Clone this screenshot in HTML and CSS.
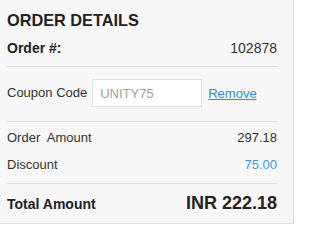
FILE: index.html
```html
<!DOCTYPE html>
<html>
<head>
<meta charset="utf-8">
<link rel="stylesheet" href="styles.css">
</head>
<body>
<div class="panel">
  <div class="head">
    <h2 class="title">ORDER DETAILS</h2>
    <div class="row order-row">
      <span class="label-strong">Order #:</span>
      <span class="num">102878</span>
    </div>
  </div>
  <div class="coupon">
    <span class="label">Coupon Code</span>
    <input class="coupon-input" type="text" placeholder="UNITY75">
    <a class="remove" href="#">Remove</a>
  </div>
  <div class="amounts">
    <div class="row line"><span class="label">Order&nbsp; Amount</span><span class="num">297.18</span></div>
    <div class="row line"><span class="label">Discount</span><span class="num blue">75.00</span></div>
  </div>
  <div class="row total">
    <span class="total-label">Total Amount</span>
    <span class="total-value">INR 222.18</span>
  </div>
</div>
</body>
</html>
```

FILE: styles.css
```css
* { box-sizing: border-box; }
html, body { margin: 0; padding: 0; background: #fff; }
body {
  font-family: "Liberation Sans", Arial, sans-serif;
  color: #333;
  width: 300px;
  height: 228px;
  overflow: hidden;
}
.panel {
  width: 294px;
  height: 224px;
  background: #f7f7f7;
  border-right: 1px solid #e0e0e0;
  border-bottom: 1px solid #e0e0e0;
  padding: 10px 16px 0 7px;
  display: flex;
  flex-direction: column;
}
.title {
  margin: 0;
  font-size: 16.3px;
  line-height: 20px;
  font-weight: bold;
  color: #222;
}
.row {
  display: flex;
  justify-content: space-between;
  align-items: baseline;
}
.head {
  border-bottom: 1px solid #dedede;
  padding-bottom: 8px;
}
.order-row {
  margin-top: 8px;
  line-height: 20px;
}
.label-strong {
  font-size: 14px;
  font-weight: bold;
  color: #222;
}
.order-row .num { font-size: 14px; color: #333; }
.coupon {
  display: flex;
  align-items: center;
  padding: 12px 0 14px;
  border-bottom: 1px solid #dedede;
}
.label { font-size: 13px; color: #333; }
.coupon .label { position: relative; top: -1px; }
.coupon-input {
  margin: 0 0 0 5px;
  width: 110px;
  height: 28px;
  border: 1px solid #e2e2e2;
  background: #fff;
  padding: 0 7px;
  font-family: "Liberation Sans", Arial, sans-serif;
  font-size: 13px;
  color: #333;
  outline: none;
}
.coupon-input::placeholder { color: #a0a0a0; }
.remove {
  margin-left: 6px;
  font-size: 13px;
  color: #2b8fd2;
  text-decoration: underline;
}
.amounts {
  padding: 2px 0 5px;
  border-bottom: 1px solid #dedede;
}
.line { line-height: 27px; }
.line .num { font-size: 13px; color: #333; }
.num.blue { color: #3a9ddb; }
.total {
  height: 39px;
  line-height: 39px;
}
.total-label {
  font-size: 14px;
  font-weight: bold;
  color: #222;
}
.total-value {
  font-size: 18px;
  font-weight: bold;
  color: #222;
}
```
